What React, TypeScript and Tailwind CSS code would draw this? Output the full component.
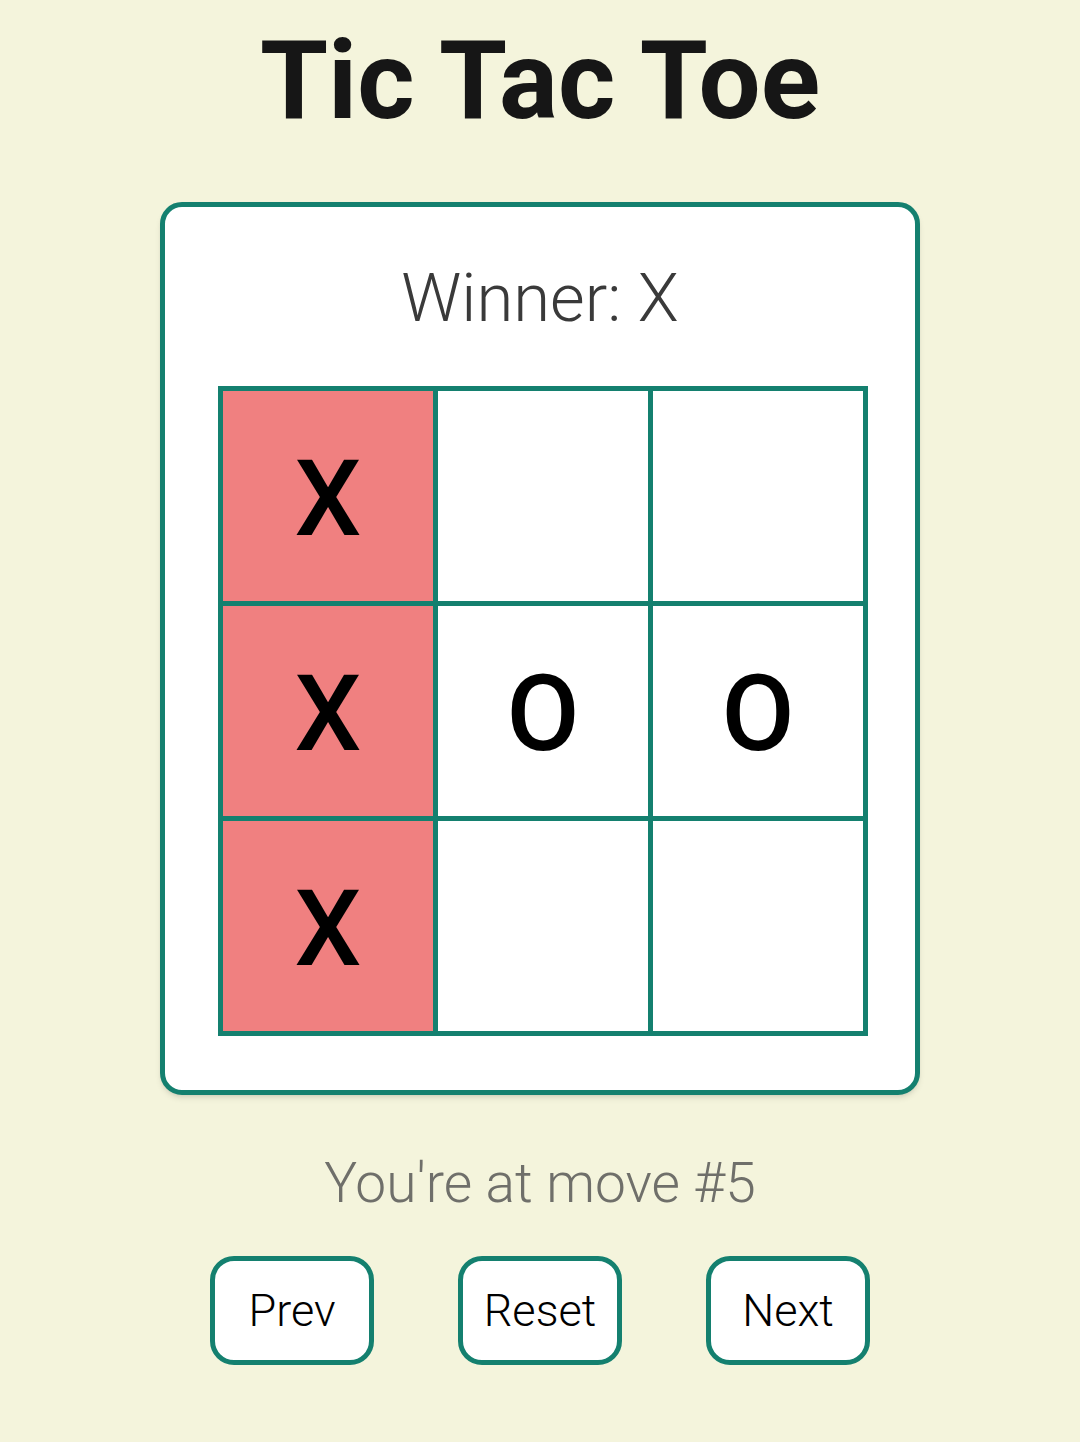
const squares = ["X", null, null, "X", "O", "O", "X", null, null];
const winLine = [0, 3, 6];

function Square({ value, win }: { value: string | null; win: boolean }) {
  return (
    <button
      className={
        "flex items-center justify-center w-[210px] h-[210px] pt-[6px] text-[106px] leading-none font-medium text-black " +
        (win ? "bg-[#f08080]" : "bg-white")
      }
    >
      {value}
    </button>
  );
}

export default function App() {
  return (
    <div
      className="min-h-[1442px] bg-[#f4f4dc] flex flex-col items-center"
      style={{ fontFamily: "Roboto, 'Noto Sans', sans-serif" }}
    >
      <h1 className="pt-[26px] text-[110px] leading-none font-bold text-[#161616]">Tic Tac Toe</h1>

      <div className="mt-[66px] w-[760px] bg-white border-[5px] border-[#14806f] rounded-[22px] shadow-md flex flex-col items-center pt-[58px] pb-[54px]">
        <div className="text-[67px] leading-none font-light text-[#3a3a3a]">Winner: X</div>
        <div className="mt-[54px] ml-[6px] grid grid-cols-3 gap-[5px] p-[5px] bg-[#14806f]">
          {squares.map((v, i) => (
            <Square key={i} value={v} win={winLine.includes(i)} />
          ))}
        </div>
      </div>

      <div className="mt-[61px] text-[55px] leading-none font-light text-[#6f6f6a]">You're at move #5</div>

      <div className="mt-[45px] flex gap-[84px]">
        {["Prev", "Reset", "Next"].map((label) => (
          <button
            key={label}
            className="w-[164px] h-[109px] bg-white border-[5px] border-[#14806f] rounded-[24px] text-[45px] leading-none font-light text-black flex items-center justify-center"
          >
            {label}
          </button>
        ))}
      </div>
    </div>
  );
}
